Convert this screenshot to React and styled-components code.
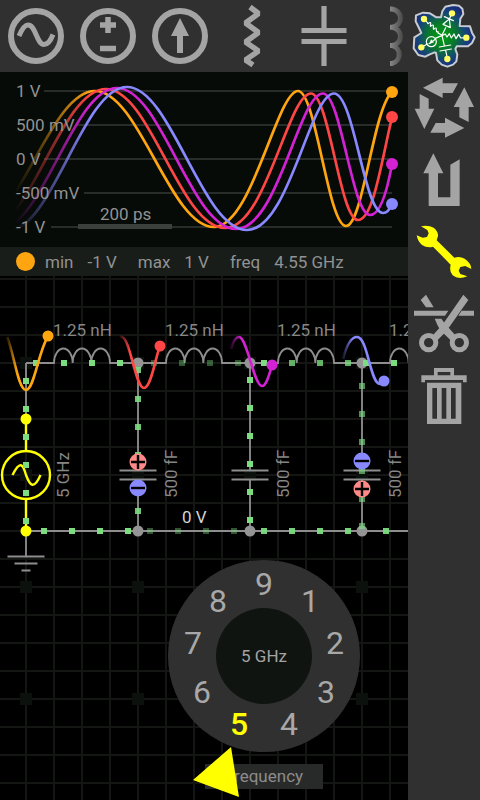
import React, { useState } from "react";
import styled, { createGlobalStyle, css } from "styled-components";

const colors = {
  bar: "#303030",
  icon: "#a4a4a4",
  active: "#ffff00",
  text: "#929292",
  wire: "#8e8e8e",
  orange: "#ffa50f",
  red: "#ff4646",
  magenta: "#d322d3",
  blue: "#8888ff",
  charge: "#7bdc80",
};

const GlobalStyle = createGlobalStyle`
  * { box-sizing: border-box; }
  body {
    margin: 0;
    background: #000;
    color: ${colors.text};
    font-family: Roboto, "Liberation Sans", sans-serif;
    font-size: 17px;
  }
`;

const Screen = styled.div`
  display: grid;
  grid-template-columns: minmax(0, 1fr) 72px;
  min-height: 100vh;
  background: #000;
`;

const Main = styled.main`
  display: flex;
  flex-direction: column;
  min-width: 0;
`;

const PartsBar = styled.nav`
  position: relative;
  display: flex;
  overflow: hidden;
  background: ${colors.bar};
  &::after {
    content: "";
    position: absolute;
    inset: 0 0 0 auto;
    width: 24px;
    background: linear-gradient(to right, #30303000, ${colors.bar});
    pointer-events: none;
  }
`;

const ToolBar = styled.aside`
  display: flex;
  flex-direction: column;
  background: ${colors.bar};
`;

const IconButton = styled.button`
  flex: 0 0 72px;
  width: 72px;
  height: 72px;
  padding: 0;
  border: 0;
  background: none;
  color: ${(p) => (p.$active ? colors.active : colors.icon)};
  cursor: pointer;
`;

const Icon = styled.svg`
  display: block;
  width: 72px;
  height: 72px;
`;

const Scope = styled.section`
  background: #060b08;
`;

const Plot = styled.svg`
  display: block;
  width: 100%;
  height: auto;
  font-family: inherit;
  font-size: 17px;
`;

const Readout = styled.dl`
  display: flex;
  align-items: center;
  gap: 21px;
  height: 29px;
  margin: 0;
  padding-left: 16px;
  background: #181d1a;
  white-space: nowrap;
`;

const Channel = styled.span`
  width: 19px;
  height: 19px;
  border-radius: 50%;
  background: ${colors.orange};
`;

const Reading = styled.div`
  display: flex;
  gap: 14px;
  &:first-of-type { margin-left: -11px; }
  dd { margin: 0; }
`;

const Workspace = styled.section`
  position: relative;
  flex: 1;
  min-height: 524px;
  overflow: hidden;
`;

const Board = styled.svg`
  display: block;
  width: 100%;
  height: 100%;
  font-family: inherit;
  font-size: 17px;
`;

const Picker = styled.fieldset`
  position: absolute;
  left: 168px;
  top: 284px;
  display: flex;
  flex-direction: column;
  align-items: center;
  gap: 12px;
  width: 192px;
  margin: 0;
  padding: 0;
  border: 0;
`;

const Dial = styled.div`
  position: relative;
  display: grid;
  place-items: center;
  width: 192px;
  height: 192px;
  border-radius: 50%;
  background: ${colors.bar};
`;

const DialValue = styled.output`
  display: grid;
  place-items: center;
  width: 96px;
  height: 96px;
  border-radius: 50%;
  background: #0f1410;
  color: #a4a4a4;
`;

const Digit = styled.label`
  position: absolute;
  left: ${(p) => 80 + Math.round(72 * Math.sin((p.$step * 2 * Math.PI) / 9))}px;
  top: ${(p) => 76 - Math.round(72 * Math.cos((p.$step * 2 * Math.PI) / 9))}px;
  width: 32px;
  height: 40px;
  color: #a8a8a8;
  font-size: 32px;
  line-height: 40px;
  text-align: center;
  cursor: pointer;
  ${(p) =>
    p.$selected &&
    css`
      color: ${colors.active};
      font-weight: 500;
    `}
`;

const DigitInput = styled.input`
  position: absolute;
  inset: 0;
  margin: 0;
  appearance: none;
`;

const ParameterName = styled.button`
  height: 25px;
  padding: 0 20px;
  border: 0;
  background: #282a29;
  color: #8c8c8c;
  font: inherit;
  line-height: 25px;
`;

const Pointer = styled.svg`
  position: absolute;
  left: 24px;
  top: 186px;
  width: 48px;
  height: 52px;
  pointer-events: none;
`;

const partIcons = {
  "AC source": (
    <g fill="none" stroke="currentColor" strokeWidth="5">
      <circle cx="36" cy="36" r="25" strokeWidth="6" />
      <path d="M19 36C22 29 24.5 25 28 25C36 25 36.5 44.5 44 44.5C48 44.5 50.5 41 53 34.5" />
    </g>
  ),
  "Voltage source": (
    <g fill="none" stroke="currentColor" strokeWidth="5.5">
      <circle cx="36" cy="36" r="25" strokeWidth="6" />
      <path d="M28 25H44M36 17V33M28 48.5H44" />
    </g>
  ),
  "Current source": (
    <g fill="currentColor">
      <circle cx="36" cy="36" r="25" fill="none" stroke="currentColor" strokeWidth="6" />
      <path d="M36 18L45 36H39V53H33V36H27Z" />
    </g>
  ),
  Resistor: (
    <path
      d="M34 7L42.5 13.5L29.5 23L42.5 32.5L29.5 42L42.5 51L29.5 60L37 65"
      fill="none" stroke="currentColor" strokeWidth="5.5" strokeLinejoin="bevel"
    />
  ),
  Capacitor: (
    <path d="M36 6V30M13.5 30.5H58.5M13.5 41.5H58.5M36 42V66" fill="none" stroke="currentColor" strokeWidth="5.2" />
  ),
  Inductor: (
    <path
      d="M30 9H32A9.5 9.2 0 0 1 32 27.3H30M32 27.3A9.5 9.2 0 0 1 32 45.6H30M32 45.6A9.5 9.2 0 0 1 32 63.5H30"
      fill="none" stroke="currentColor" strokeWidth="5"
    />
  ),
};

const toolIcons = {
  Rotate: (
    <path
      transform="scale(.33333)" fill="currentColor"
      d="M45 47L104 17V34H150L134 63H104V78ZM169 46L198 105H182V150L154 136V105H137ZM169 168L111 197V182H67L83 153H111V137ZM49 171L20 110H35V66L62 80V110H79Z"
    />
  ),
  Undo: (
    <path transform="scale(.33333)" fill="currentColor" d="M76 28L106 88H90V160H127V62L155 46V186H62V88H46Z" />
  ),
  Settings: (
    <path
      transform="scale(.33333)" fill="currentColor"
      d="M39 31Q60 26 77 35Q91 46 90 60L86 73L139 125Q155 120 170 128Q190 142 190 159L172 150L157 153L152 164L157 174L178 181Q151 192 134 178Q123 167 128 146L75 92Q58 97 42 87Q29 76 26 58L44 65L57 63L62 52L58 42Z"
    />
  ),
  Cut: (
    <g transform="scale(.33333)" fill="currentColor">
      <path d="M38 36L54 20L77 58H54ZM18 68H121L111 83H18ZM161 68H198V83H151ZM166 20L181 36L115 130L86 159L72 145L105 108ZM80 92H100L110 106L146 146L131 160L100 130L90 115Z" />
      <g fill="none" stroke="currentColor" strokeWidth="15">
        <circle cx="62" cy="164" r="21.5" />
        <circle cx="154" cy="164" r="21.5" />
      </g>
    </g>
  ),
  Delete: (
    <path
      transform="scale(.33333)" fill="currentColor" fillRule="evenodd"
      d="M78 24H138V46H176V67H165V60H51V67H40V46H78ZM89 36V46H127V36ZM57 68H160V192H57ZM73 84V176H87V84ZM101 84V176H115V84ZM129 84V176H143V84Z"
    />
  ),
};

function Logo() {
  return (
    <Icon viewBox="504 0 216 216" aria-hidden="true">
      <defs>
        <radialGradient id="leaf" gradientUnits="userSpaceOnUse" cx="605" cy="108" r="98">
          <stop offset="0" stopColor="#00a010" />
          <stop offset=".4" stopColor="#087a28" />
          <stop offset=".75" stopColor="#17427d" />
          <stop offset="1" stopColor="#182a78" />
        </radialGradient>
      </defs>
      <path
        d="M607 34L616 20L639 15L657 17L667 26L670 42L661 56L659 78L690 79L696 98L704 112L696 129L684 139L650 139L646 147L652 164L649 184L639 194L622 200L605 194L592 181L588 159L584 157L569 163L556 170L535 165L521 145L523 112L544 99L534 78L527 64L528 46L549 38L570 40L589 52L603 52Z"
        fill="url(#leaf)" stroke="#c8ccd2" strokeWidth="6" strokeLinejoin="round"
      />
      <g fill="none" stroke="#fff" strokeWidth="3.6" strokeLinejoin="round" strokeLinecap="round">
        <path d="M635 42L628 57M617 83L605 107M613 50L640 62M609 73L628 57L631 83Z" />
        <path d="M607 106L616 102L621 111L628 101L634 114L642 102L648 116L656 103L662 114L676 113" />
        <path d="M554 58Q561 65 564 71C579 60 568 79 572 79C586 67 577 87 581 88C594 76 586 96 591 96Q596 92 594 99L605 105" />
        <path d="M605 107L586 115M562 132L546 141M567 131L584 119" />
        <circle cx="574" cy="125" r="15" />
        <path d="M606 107L613 137M598 141L632 135M600 153L634 147M617 151L622 175" />
      </g>
      <path d="M568 132L573 118L582 127Z" fill="#fff" />
      <g fill="#ffff62">
        <circle cx="552" cy="57" r="9.5" />
        <circle cx="636" cy="40" r="9.5" />
        <circle cx="679" cy="113" r="9.5" />
        <circle cx="622" cy="177" r="9.5" />
        <circle cx="544" cy="142" r="9.5" />
      </g>
    </Icon>
  );
}

/* Each trace is a smooth path in plot units, with the height of its newest sample. */
const traces = [
  { color: colors.orange, d: "M-25 155C19 155 50 19 95 19C139 19 170 155 214 155C252 155 277 19 298 19C316 19 328 154 346 154C363 154 373 37 392 20", y: 20 },
  { color: colors.red, d: "M-12 156C31 156 61 17 106 17C150 17 180 156 225 156C266 156 288 21.5 311 21.5C329 21.5 340 148 358 148C373 148 381 92 392 45", y: 45 },
  { color: colors.magenta, d: "M-1 157C42 157 73 16 117 16C161 16 191 157 236 157C278 157 299 21.5 323 21.5C341 21.5 352 143 370 143C380 143 387 120 392 92", y: 92 },
  { color: colors.blue, d: "M9 158C52 158 83 15 127 15C171 15 202 158 247 158C289 158 310 21.5 334 21.5C354 21.5 364 141 383 141C387 141 390 137 392 132", y: 132 },
];

const levels = [
  { label: "1 V", y: 19, from: 44 },
  { label: "500 mV", y: 53, from: 77 },
  { label: "0 V", y: 87, from: 44 },
  { label: "-500 mV", y: 121, from: 84 },
  { label: "-1 V", y: 155, from: 51 },
];

function ScopePlot() {
  return (
    <Plot viewBox="0 0 408 175" role="img" aria-label="Voltage traces">
      <defs>
        <linearGradient id="age" gradientUnits="userSpaceOnUse" x1="14" y1="0" x2="90" y2="0">
          <stop offset="0" stopColor="#fff" stopOpacity="0" />
          <stop offset="1" stopColor="#fff" />
        </linearGradient>
        <mask id="fade" maskUnits="userSpaceOnUse" x="0" y="0" width="408" height="175">
          <rect width="408" height="175" fill="url(#age)" />
        </mask>
      </defs>
      {levels.map((l) => (
        <path key={l.label} d={`M${l.from} ${l.y}H392`} stroke="#292d2a" strokeWidth="2" />
      ))}
      <rect x="78" y="152" width="94" height="5" fill="#3c403d" />
      <g mask="url(#fade)" fill="none" strokeWidth="2.7">
        {traces.map((t) => <path key={t.color} d={t.d} stroke={t.color} />)}
      </g>
      {traces.map((t) => <circle key={t.color} cx="392" cy={t.y} r="6" fill={t.color} />)}
      <g fill={colors.text}>
        {levels.map((l) => <text key={l.label} x="16" y={l.y + 6}>{l.label}</text>)}
        <text x="100" y="148">200 ps</text>
      </g>
    </Plot>
  );
}

function Inductor({ x }) {
  return (
    <g transform={`translate(${x} 0)`}>
      <path
        d="M0 0H28A9.33 14.5 0 0 1 46.67 0A9.33 14.5 0 0 1 65.33 0A9.33 14.5 0 0 1 84 0H112"
        fill="none" stroke={colors.wire} strokeWidth="1.8"
      />
      <text x="27" y="-27" fill="#868686">1.25 nH</text>
    </g>
  );
}

function Sign({ x, y, positive }) {
  return (
    <g transform={`translate(${x} ${y})`}>
      <circle r="8.5" fill={positive ? "#ff8888" : colors.blue} />
      <path d={positive ? "M-7 0H7M0 -7V7" : "M-7 0H7"} stroke="#000" strokeWidth="2.4" />
    </g>
  );
}

function Capacitor({ x }) {
  return (
    <g transform={`translate(${x} 0)`}>
      <path d="M0 0V107M0 116V168M-18.5 107.5H18.5M-18.5 116.5H18.5" stroke={colors.wire} strokeWidth="1.8" />
      <text transform="translate(39 135) rotate(-90)" fill="#868686">500 fF</text>
    </g>
  );
}

const row = (xs, y, o) => xs.map((x) => [x, y, o]);
const column = (x, ys, o) => ys.map((y) => [x, y, o]);
const charges = [
  ...row([10, 38, 66, 94], 0, 1),
  ...row([128, 156, 184, 212], 0, 0.4),
  ...row([238], 0, 1),
  ...row([266, 294, 322], 0, 0.8),
  ...row([340, 368], 0, 1),
  ...column(0, [18, 46, 74, 102, 130, 158], 1),
  ...column(112, [7, 36, 64, 92, 148], 0.9),
  ...column(224, [17, 45, 73, 101, 129, 157], 1),
  ...column(336, [23, 51, 79, 108, 136, 163], 0.65),
  ...row([18, 46, 74, 102], 168, 1),
  ...row([124, 152, 180, 208], 168, 0.4),
  ...row([238, 266, 294, 322, 360], 168, 0.95),
];

const probes = [
  { id: "p1", color: colors.orange, x: -19, d: "M-19 -26C-12 -10 -8 27 0 27C8 27 12 -10 22 -27", end: [22, -27] },
  { id: "p2", color: colors.red, x: 94, d: "M94 -26C104 -30 109 25 118 25C125 25 129 -4 134 -17", end: [134, -17] },
  { id: "p3", color: colors.magenta, x: 205, d: "M205 -14C207 -22 210 -26 213 -26C221 -26 228 23 236 23C240 23 243 13 246 2", end: [246, 2] },
  { id: "p4", color: colors.blue, x: 317, d: "M317 -4C321 -20 326 -26 331 -26C342 -26 344 21 354 21C356 21 358 20 358 18", end: [358, 18] },
];

function Circuit() {
  return (
    <Board role="img" aria-label="Circuit schematic">
      <defs>
        <pattern id="grid" patternUnits="userSpaceOnUse" x="12" y="17" width="28" height="28">
          <path d="M14 0V28M0 14H28" stroke="#141614" strokeWidth="2" />
        </pattern>
        <pattern id="anchors" patternUnits="userSpaceOnUse" x="-30" y="31" width="112" height="112">
          <rect x="50" y="50" width="12" height="12" fill="#0c110d" />
        </pattern>
        {probes.map((p) => (
          <linearGradient key={p.id} id={p.id} gradientUnits="userSpaceOnUse" x1={p.x} y1="0" x2={p.x + 10} y2="0">
            <stop offset="0" stopColor={p.color} stopOpacity=".15" />
            <stop offset="1" stopColor={p.color} />
          </linearGradient>
        ))}
      </defs>
      <rect width="100%" height="100%" fill="url(#grid)" />
      <rect width="100%" height="100%" fill="url(#anchors)" />
      <g transform="translate(26 87)">
        {[0, 112, 224, 336].map((x) => <Inductor key={x} x={x} />)}
        {[112, 224, 336].map((x) => <Capacitor key={x} x={x} />)}
        <path
          d="M0 0V56M0 168H448M0 168V193M-18.5 193.5H18.5M-11.5 200.5H11.5M-4.5 207.5H4.5"
          stroke={colors.wire} strokeWidth="1.8"
        />
        <g fill="none" stroke={colors.active} strokeWidth="2.4">
          <path d="M0 56V88M0 136V168" />
          <circle cy="112" r="24" />
          <path d="M-13.5 112C-6 97 -3 101 0 112C4 123 8 127 14.5 112" />
        </g>
        <text transform="translate(43 135) rotate(-90)" fill="#868686">5 GHz</text>
        <text x="156" y="160" fill="#d4d4d4">0 V</text>
        {[112, 224, 336].map((x) => (
          <g key={x} fill="#949494">
            <circle cx={x} r="5.5" />
            <circle cx={x} cy="168" r="5.5" />
          </g>
        ))}
        {charges.map(([x, y, o]) => (
          <rect key={`${x}:${y}`} x={x - 3} y={y - 3} width="6" height="6" fill={colors.charge} opacity={o} />
        ))}
        <circle cy="56" r="5.5" fill={colors.active} />
        <circle cy="168" r="5.5" fill={colors.active} />
        <Sign x={112} y={99} positive />
        <Sign x={112} y={125} />
        <Sign x={336} y={98} />
        <Sign x={336} y={126} positive />
        {probes.map((p) => (
          <g key={p.id}>
            <path d={p.d} fill="none" stroke={`url(#${p.id})`} strokeWidth="2.6" />
            <circle cx={p.end[0]} cy={p.end[1]} r="5.5" fill={p.color} />
          </g>
        ))}
      </g>
    </Board>
  );
}

const readings = [["min", "-1 V"], ["max", "1 V"], ["freq", "4.55 GHz"]];
const digits = [1, 2, 3, 4, 5, 6, 7, 8, 9];

export default function App() {
  const [frequency, setFrequency] = useState(5);
  const [tool, setTool] = useState("Settings");

  return (
    <Screen>
      <GlobalStyle />
      <Main>
        <PartsBar aria-label="Components">
          {Object.entries(partIcons).map(([name, drawing]) => (
            <IconButton key={name} aria-label={name}>
              <Icon viewBox="0 0 72 72">{drawing}</Icon>
            </IconButton>
          ))}
        </PartsBar>
        <Scope>
          <ScopePlot />
          <Readout>
            <Channel />
            {readings.map(([name, value]) => (
              <Reading key={name}>
                <dt>{name}</dt>
                <dd>{value}</dd>
              </Reading>
            ))}
          </Readout>
        </Scope>
        <Workspace>
          <Circuit />
          <Picker aria-label="Frequency">
            <Dial>
              {digits.map((n) => (
                <Digit key={n} $step={n} $selected={n === frequency}>
                  <DigitInput
                    type="radio" name="frequency" value={n}
                    checked={n === frequency} onChange={() => setFrequency(n)}
                  />
                  {n}
                </Digit>
              ))}
              <DialValue>{frequency} GHz</DialValue>
            </Dial>
            <ParameterName>Frequency</ParameterName>
            <Pointer viewBox="0 0 48 52" aria-hidden="true">
              <path d="M39 1L1 34L47 51Z" fill={colors.active} />
            </Pointer>
          </Picker>
        </Workspace>
      </Main>
      <ToolBar aria-label="Tools">
        <IconButton aria-label="Menu"><Logo /></IconButton>
        {Object.entries(toolIcons).map(([name, drawing]) => (
          <IconButton key={name} aria-label={name} $active={name === tool} onClick={() => setTool(name)}>
            <Icon viewBox="0 0 72 72">{drawing}</Icon>
          </IconButton>
        ))}
      </ToolBar>
    </Screen>
  );
}
